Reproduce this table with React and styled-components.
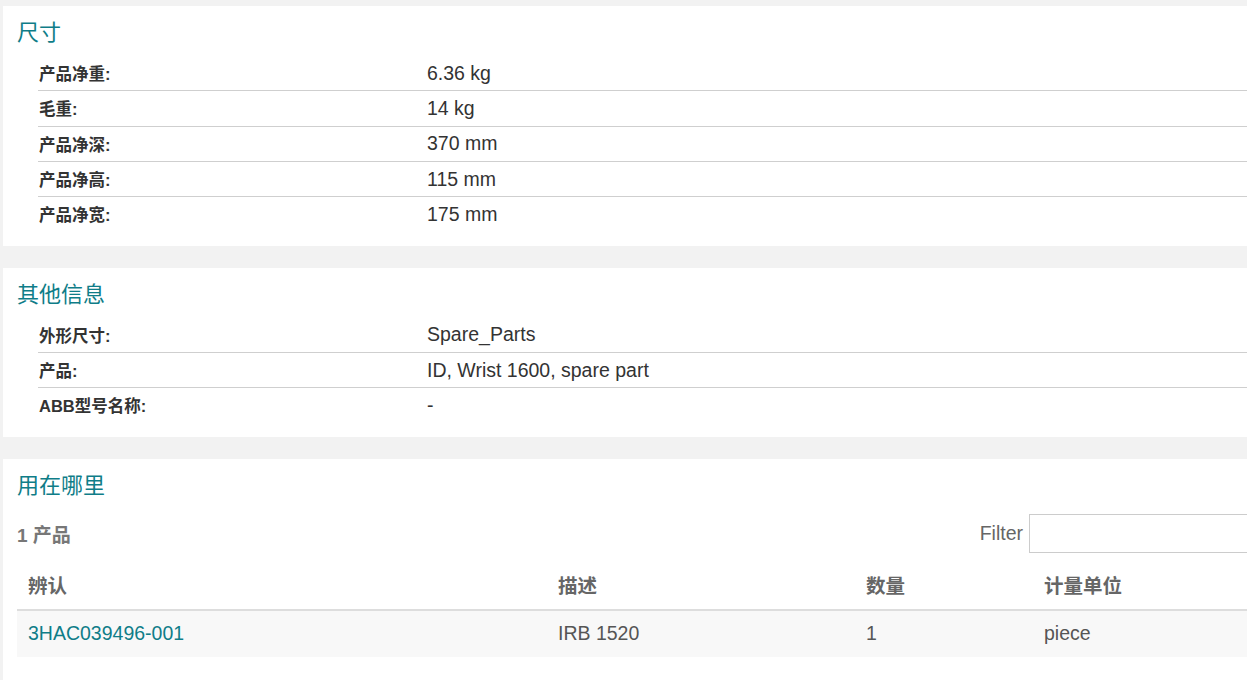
import React from 'react';
import styled, { createGlobalStyle } from 'styled-components';

const GlobalStyle = createGlobalStyle`
  html, body {
    margin: 0;
    padding: 0;
    background: #f2f2f2;
    overflow: hidden;
  }
  body {
    font-family: "Liberation Sans", Arial, "Noto Sans CJK SC", sans-serif;
    color: #333;
  }
`;

const Page = styled.div`
  width: 1300px;
  padding: 6px 0 0 3px;
  display: flex;
  flex-direction: column;
  gap: 22px;
`;

const Card = styled.section`
  background: #fff;
  padding: 12px 0 ${p => (p.last ? '40px' : '14px')} 14px;
`;

const Title = styled.h2`
  margin: 0 0 8px;
  font-size: 22px;
  line-height: 30px;
  font-weight: normal;
  color: #0f7d88;
`;

const Specs = styled.dl`
  margin: 0 0 0 21px;
  padding: 0;
`;

const SpecRow = styled.div`
  display: flex;
  align-items: center;
  height: 34.33px;
  border-bottom: 1px solid #cfcfcf;

  &:last-child {
    border-bottom: none;
  }
`;

const Label = styled.dt`
  width: 388px;
  padding-left: 1px;
  font-size: 16.5px;
  font-weight: bold;
  color: #333;
`;

const Value = styled.dd`
  margin: 0;
  font-size: 19.5px;
  color: #333;
`;

const Toolbar = styled.div`
  display: flex;
  align-items: center;
  justify-content: space-between;
  height: 39px;
  margin-top: 13px;
`;

const Count = styled.div`
  font-size: 19px;
  font-weight: bold;
  color: #777;
`;

const FilterBox = styled.label`
  display: flex;
  align-items: center;
  gap: 6px;
  font-size: 19.5px;
  color: #666;
`;

const FilterInput = styled.input`
  width: 260px;
  height: 39px;
  box-sizing: border-box;
  border: 1px solid #ccc;
  outline: none;
  margin-right: 14px;
`;

const Table = styled.table`
  width: calc(100% - 14px);
  border-collapse: collapse;
  margin-top: 7px;
`;

const Th = styled.th`
  text-align: left;
  height: 50px;
  padding: 0 11px;
  font-size: 19.5px;
  font-weight: bold;
  color: #666;
  border-bottom: 2px solid #ddd;
  width: ${p => (p.w ? `${p.w}px` : 'auto')};
  box-sizing: border-box;
`;

const Td = styled.td`
  height: 46px;
  padding: 0 11px;
  font-size: 19.5px;
  color: #555;
  background: #f8f8f8;
`;

const PartLink = styled.a`
  color: #0f7d88;
  text-decoration: none;
`;

const dimensions = [
  ['产品净重:', '6.36 kg'],
  ['毛重:', '14 kg'],
  ['产品净深:', '370 mm'],
  ['产品净高:', '115 mm'],
  ['产品净宽:', '175 mm'],
];

const other = [
  ['外形尺寸:', 'Spare_Parts'],
  ['产品:', 'ID, Wrist 1600, spare part'],
  ['ABB型号名称:', '-'],
];

const SpecList = ({ rows }) => (
  <Specs>
    {rows.map(([k, v]) => (
      <SpecRow key={k}>
        <Label>{k}</Label>
        <Value>{v}</Value>
      </SpecRow>
    ))}
  </Specs>
);

export default function App() {
  return (
    <>
      <GlobalStyle />
      <Page>
        <Card>
          <Title>尺寸</Title>
          <SpecList rows={dimensions} />
        </Card>
        <Card>
          <Title>其他信息</Title>
          <SpecList rows={other} />
        </Card>
        <Card last>
          <Title>用在哪里</Title>
          <Toolbar>
            <Count>1 产品</Count>
            <FilterBox>
              Filter
              <FilterInput type="text" />
            </FilterBox>
          </Toolbar>
          <Table>
            <thead>
              <tr>
                <Th w={530}>辨认</Th>
                <Th w={308}>描述</Th>
                <Th w={178}>数量</Th>
                <Th>计量单位</Th>
              </tr>
            </thead>
            <tbody>
              <tr>
                <Td><PartLink href="#">3HAC039496-001</PartLink></Td>
                <Td>IRB 1520</Td>
                <Td>1</Td>
                <Td>piece</Td>
              </tr>
            </tbody>
          </Table>
        </Card>
      </Page>
    </>
  );
}
